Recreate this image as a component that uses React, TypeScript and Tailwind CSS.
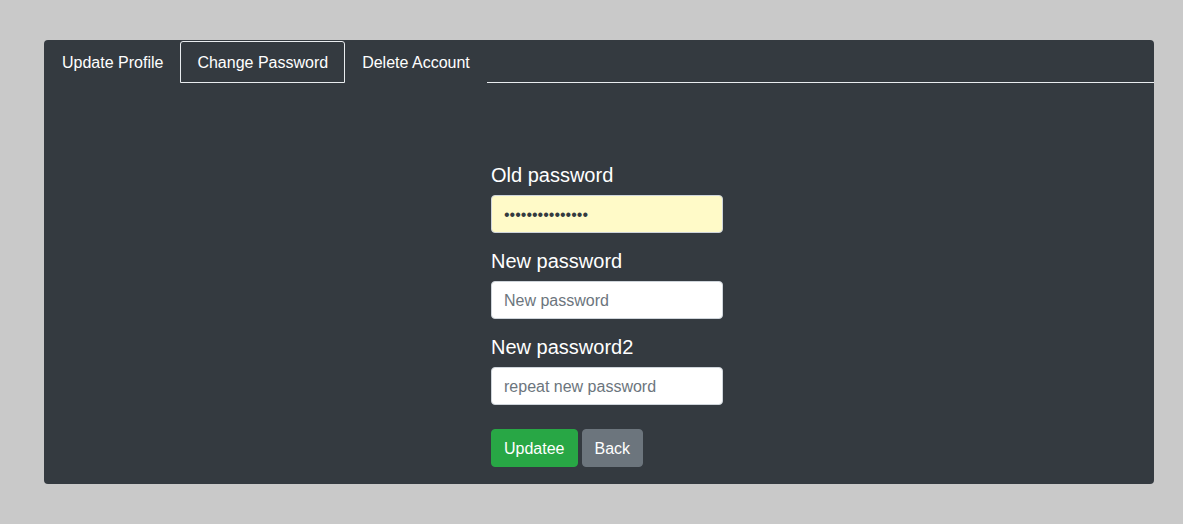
import React from "react";

export default function App() {
  const font = { fontFamily: '"Liberation Sans", Arial, sans-serif' };
  return (
    <div className="min-h-[524px] w-full bg-[#c9c9c9] pt-[40px] pl-[44px] pr-[29px]" style={font}>
      <div className="w-[1110px] h-[444px] bg-[#343a40] rounded-[4px] flex flex-col">
        <div className="flex items-end h-[43px] pl-[1px]">
          <div className="h-[42px] px-[16px] pt-[9px] text-[16px] leading-[24px] text-white border border-transparent mt-[1px]">
            Update Profile
          </div>
          <div className="h-[42px] px-[16px] pt-[9px] text-[16px] leading-[24px] text-white border border-[#e9ecef] rounded-t-[3px] mt-[1px]">
            Change Password
          </div>
          <div className="h-[42px] px-[16px] pt-[9px] text-[16px] leading-[24px] text-white border border-transparent mt-[1px]">
            Delete Account
          </div>
          <div className="flex-1 border-b border-[#e9ecef]" />
        </div>
        <form className="ml-[447px] w-[232px] mt-[80px]" onSubmit={(e) => e.preventDefault()}>
          <div className="mb-4">
            <label className="block text-[20px] leading-[24px] text-white mb-2">Old password</label>
            <input
              type="password"
              defaultValue="abcdefghijklmno"
              className="block w-full h-[38px] rounded-[4px] border border-[#ced4da] bg-[#fffac8] px-3 pt-[2px] text-[16px] text-[#343a40] outline-none"
            />
          </div>
          <div className="mb-4">
            <label className="block text-[20px] leading-[24px] text-white mb-2">New password</label>
            <input
              type="password"
              placeholder="New password"
              className="block w-full h-[38px] rounded-[4px] border border-[#ced4da] bg-white px-3 pt-[2px] text-[16px] text-[#495057] placeholder:text-[#6c757d] outline-none"
              style={font}
            />
          </div>
          <div className="mb-6">
            <label className="block text-[20px] leading-[24px] text-white mb-2">New password2</label>
            <input
              type="password"
              placeholder="repeat new password"
              className="block w-full h-[38px] rounded-[4px] border border-[#ced4da] bg-white px-3 pt-[2px] text-[16px] text-[#495057] placeholder:text-[#6c757d] outline-none"
              style={font}
            />
          </div>
          <div className="flex gap-[4px]">
            <button type="submit" className="h-[38px] px-[12px] pt-[2px] rounded-[4px] bg-[#28a745] border border-[#28a745] text-white text-[16px] leading-[24px]">
              Updatee
            </button>
            <button type="button" className="h-[38px] px-[12px] pt-[2px] rounded-[4px] bg-[#6c757d] border border-[#6c757d] text-white text-[16px] leading-[24px]">
              Back
            </button>
          </div>
        </form>
      </div>
    </div>
  );
}
